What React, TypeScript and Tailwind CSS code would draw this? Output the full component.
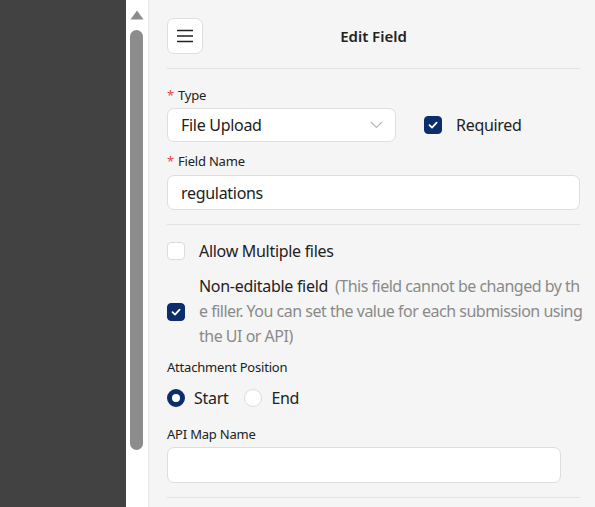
import React, { useState } from 'react';

const navy = 'bg-[#0c2d6b]';

const Check: React.FC<{ checked: boolean; onClick?: () => void }> = ({ checked, onClick }) => (
    <button
        type="button"
        onClick={onClick}
        className={`w-[18px] h-[18px] rounded-[4px] flex items-center justify-center shrink-0 ${checked ? `${navy} border border-[#0c2d6b]` : 'bg-white border border-[#dcdcdc]'}`}
    >
        {checked && (
            <svg width="12" height="12" viewBox="0 0 12 12" fill="none">
                <path d="M2.5 6.2 L5 8.6 L9.6 3.6" stroke="white" strokeWidth="1.8" strokeLinecap="round" strokeLinejoin="round" />
            </svg>
        )}
    </button>
);

const Radio: React.FC<{ checked: boolean }> = ({ checked }) => (
    <span className={`w-[18px] h-[18px] rounded-full shrink-0 ${checked ? 'border-[5px] border-[#0c2d6b] bg-white' : 'border border-[#dcdcdc] bg-white'}`} />
);

const Label: React.FC<{ text: string; required?: boolean }> = ({ text, required }) => (
    <div className="text-[13px] text-[#222] leading-[18px] flex gap-1 tracking-[-0.2px]">
        {required && <span className="text-[#e5484d]">*</span>}
        <span>{text}</span>
    </div>
);

export default function App() {
    const [required, setRequired] = useState(true);
    const [multiple, setMultiple] = useState(false);
    const [nonEditable, setNonEditable] = useState(true);
    const [position, setPosition] = useState<'start' | 'end'>('start');

    return (
        <div className="w-[595px] h-[507px] flex overflow-hidden" style={{ fontFamily: '"Noto Sans", "Open Sans", sans-serif' }}>
            <div className="w-[126px] shrink-0 bg-[#424242]" />
            <div className="w-[23px] shrink-0 bg-white border-r border-[#e6e6e6] flex flex-col items-center pt-[10px] pr-[1px]">
                <svg width="14" height="10" viewBox="0 0 14 10">
                    <path d="M7 0.5 L13.5 9.5 L0.5 9.5 Z" fill="#8c8c8c" />
                </svg>
                <div className="w-[13px] h-[420px] mt-[10px] rounded-full bg-[#8c8c8c]" />
            </div>
            <div className="flex-1 min-w-0 bg-[#f5f5f5] pl-[18px] pr-[15px] pt-[18px] tracking-[-0.3px]">
                <div className="flex items-center h-[36px]">
                    <button className="w-[36px] h-[36px] shrink-0 rounded-[7px] bg-white border border-[#dedede] flex items-center justify-center">
                        <svg width="18" height="14" viewBox="0 0 18 14">
                            <path d="M1 1.5 H17 M1 7 H17 M1 12.5 H17" stroke="#222" strokeWidth="1.4" />
                        </svg>
                    </button>
                    <div className="flex-1 text-center text-[15px] font-semibold text-[#222] pr-[36px] tracking-normal">Edit Field</div>
                </div>
                <div className="mt-[14px] border-t border-[#e2e2e2]" />

                <div className="mt-[17px]">
                    <Label text="Type" required />
                    <div className="mt-[4px] flex items-center">
                        <div className="w-[229px] h-[34px] bg-white border border-[#dedede] rounded-[7px] flex items-center justify-between pl-[13px] pr-[12px]">
                            <span className="text-[16px] text-[#222]">File Upload</span>
                            <svg width="13" height="8" viewBox="0 0 13 8">
                                <path d="M1 1 L6.5 6.5 L12 1" stroke="#b5b5b5" strokeWidth="1.1" fill="none" />
                            </svg>
                        </div>
                        <div className="ml-[28px] flex items-center gap-[14px]">
                            <Check checked={required} onClick={() => setRequired(!required)} />
                            <span className="text-[16px] text-[#222]">Required</span>
                        </div>
                    </div>
                </div>

                <div className="mt-[10px]">
                    <Label text="Field Name" required />
                    <input
                        defaultValue="regulations"
                        className="mt-[5px] w-full h-[35px] bg-white border border-[#dedede] rounded-[7px] px-[13px] text-[16px] text-[#222] outline-none tracking-[-0.3px]"
                    />
                </div>

                <div className="mt-[14px] border-t border-[#e2e2e2]" />

                <div className="mt-[17px] flex items-center gap-[14px] h-[18px]">
                    <Check checked={multiple} onClick={() => setMultiple(!multiple)} />
                    <span className="text-[16px] text-[#222]">Allow Multiple files</span>
                </div>

                <div className="mt-[14px] flex items-center gap-[14px]">
                    <Check checked={nonEditable} onClick={() => setNonEditable(!nonEditable)} />
                    <p className="text-[16px] leading-[25px] text-[#8a8a8a] whitespace-nowrap tracking-[-0.5px]">
                        <span className="text-[#222] tracking-[-0.3px]">Non-editable field</span>
                        <span className="ml-[7px]">(This field cannot be changed by th</span>
                        <br />
                        e filler. You can set the value for each submission using
                        <br />
                        the UI or API)
                    </p>
                </div>

                <div className="mt-[9px]">
                    <Label text="Attachment Position" />
                    <div className="mt-[12px] flex items-center h-[20px]">
                        <button className="flex items-center gap-[9px]" onClick={() => setPosition('start')}>
                            <Radio checked={position === 'start'} />
                            <span className="text-[16px] text-[#222]">Start</span>
                        </button>
                        <button className="ml-[16px] flex items-center gap-[9px]" onClick={() => setPosition('end')}>
                            <Radio checked={position === 'end'} />
                            <span className="text-[16px] text-[#222]">End</span>
                        </button>
                    </div>
                </div>

                <div className="mt-[17px]">
                    <Label text="API Map Name" />
                    <input className="mt-[4px] w-[394px] h-[36px] bg-white border border-[#dedede] rounded-[7px] px-[13px] text-[16px] outline-none" />
                </div>

                <div className="mt-[14px] border-t border-[#e2e2e2]" />
            </div>
        </div>
    );
}
